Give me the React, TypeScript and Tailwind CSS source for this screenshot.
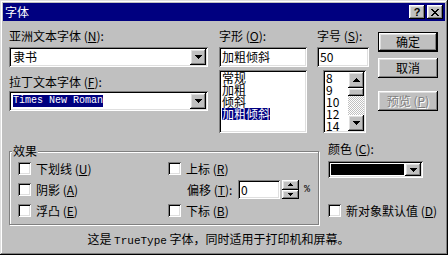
import React from 'react';

const raised =
  'bg-[#c0c0c0] shadow-[inset_-1px_-1px_0_#000,inset_1px_1px_0_#fff,inset_-2px_-2px_0_#808080,inset_2px_2px_0_#dfdfdf]';
const sunken =
  'bg-white shadow-[inset_1px_1px_0_#808080,inset_-1px_-1px_0_#fff,inset_2px_2px_0_#000,inset_-2px_-2px_0_#dfdfdf]';

const Arrow = ({ up = false }: { up?: boolean }) => (
  <svg width="7" height="4" viewBox="0 0 7 4" className="block" shapeRendering="crispEdges">
    <path
      d={up ? 'M3 0h1v1h1v1h1v1h1v1H0V3h1V2h1V1h1z' : 'M0 0h7v1H6v1H5v1H4v1H3V3H2V2H1V1H0z'}
      fill="#000"
    />
  </svg>
);

const DropButton = () => (
  <div className={`${raised} w-[16px] shrink-0 flex items-center justify-center`}>
    <Arrow />
  </div>
);

const Combo = ({ children, className = '' }: { children?: React.ReactNode; className?: string }) => (
  <div className={`${sunken} flex p-[2px] ${className}`}>
    <div className="flex-1 flex items-center overflow-hidden">{children}</div>
    <DropButton />
  </div>
);

const Key = ({ c }: { c: string }) => (
  <>
    {' '}(<u>{c}</u>)
  </>
);

const Label = ({ children, className = '' }: { children: React.ReactNode; className?: string }) => (
  <div className={`h-[12px] leading-[12px] whitespace-nowrap ${className}`}>{children}</div>
);

const Check = () => <div className={`${sunken} w-[13px] h-[13px] shrink-0`} />;

const CheckRow = ({ children }: { children: React.ReactNode }) => (
  <div className="flex items-center h-[13px] gap-[5px]">
    <Check />
    <span className="leading-[12px] whitespace-nowrap">{children}</span>
  </div>
);

const Button = ({
  children,
  className = '',
  isDefault = false,
  disabled = false,
}: {
  children: React.ReactNode;
  className?: string;
  isDefault?: boolean;
  disabled?: boolean;
}) => (
  <div className={`w-[60px] h-[20px] ${isDefault ? 'border border-black' : ''} ${className}`}>
    <div
      className={`${raised} w-full h-full flex items-center justify-center leading-[12px] ${
        disabled ? 'text-[#808080] [text-shadow:1px_1px_0_#fff]' : ''
      }`}
    >
      {children}
    </div>
  </div>
);

// list row: fixed 12px box so the tall CJK content area doesn't spill over
const Row = ({ children }: { children: React.ReactNode }) => (
  <div className="h-[12px] leading-[12px] overflow-visible">{children}</div>
);

export default function App() {
  return (
    <div className="w-[448px] h-[255px] bg-[#c0c0c0] p-[3px] flex flex-col text-[12px] text-black font-['Noto_Sans_CJK_SC',sans-serif] shadow-[inset_-1px_-1px_0_#000,inset_1px_1px_0_#dfdfdf,inset_-2px_-2px_0_#808080,inset_2px_2px_0_#fff]">
      {/* title bar */}
      <div className="h-[18px] bg-[#000080] flex items-center pl-[2px] pr-[2px]">
        <span className="text-white leading-[12px] flex-1">字体</span>
        <div className={`${raised} w-[16px] h-[14px] flex items-center justify-center font-['Liberation_Sans',sans-serif] font-bold text-[11px] leading-[11px]`}>
          ?
        </div>
        <div className={`${raised} w-[16px] h-[14px] ml-[2px] flex items-center justify-center`}>
          <svg width="8" height="7" viewBox="0 0 8 7" shapeRendering="crispEdges">
            <path d="M0 0h2v1h1v1h2V1h1V0h2v1H7v1H6v1H5v1h1v1h1v1h1v1H6V6H5V5H3v1H2v1H0V6h1V5h1V4h1V3H2V2H1V1H0z" fill="#000" />
          </svg>
        </div>
      </div>

      {/* top section */}
      <div className="flex pl-[6px]">
        <div className="w-[199px] flex flex-col">
          <Label className="mt-[9px]">
            亚洲文本字体<Key c="N" />:
          </Label>
          <Combo className="mt-[5px] h-[20px]">
            <span className="pl-[2px] leading-[12px]">隶书</span>
          </Combo>
          <Label className="mt-[9px]">
            拉丁文本字体<Key c="F" />:
          </Label>
          <Combo className="mt-[3px] h-[20px]">
            <span className="ml-[2px] inline-block h-[12px] bg-[#000080] text-white font-['Liberation_Mono',monospace] text-[10px] leading-[12px]">
              Times New Roman
            </span>
          </Combo>
        </div>

        <div className="w-[88px] ml-[11px] flex flex-col">
          <Label className="mt-[9px]">
            字形<Key c="O" />:
          </Label>
          <div className={`${sunken} mt-[5px] h-[20px] flex items-center pl-[3px]`}>
            <span className="leading-[12px]">加粗倾斜</span>
          </div>
          <div className={`${sunken} mt-[3px] h-[63px] p-[2px] pl-[3px] flex flex-col`}>
            <Row>常规</Row>
            <Row>加粗</Row>
            <Row>倾斜</Row>
            <Row>
              <span className="inline-block h-[12px] leading-[12px] align-top bg-[#000080] text-white">加粗倾斜</span>
            </Row>
          </div>
        </div>

        <div className="w-[52px] ml-[10px] flex flex-col">
          <Label className="mt-[9px]">
            字号<Key c="S" />:
          </Label>
          <div className={`${sunken} mt-[5px] h-[20px] flex items-center pl-[3px]`}>
            <span className="leading-[12px]">50</span>
          </div>
          <div className={`${sunken} mt-[3px] ml-[6px] w-[43px] h-[63px] p-[2px] flex`}>
            <div className="flex-1 flex flex-col pl-[1px]">
              <Row>8</Row>
              <Row>9</Row>
              <Row>10</Row>
              <Row>12</Row>
              <Row>14</Row>
            </div>
            <div className="w-[16px] flex flex-col">
              <div className={`${raised} h-[16px] flex items-center justify-center`}>
                <Arrow up />
              </div>
              <div className={`${raised} h-[8px]`} />
              <div className="flex-1 bg-[repeating-conic-gradient(#fff_0_25%,#c0c0c0_0_50%)] bg-[length:2px_2px]" />
              <div className={`${raised} h-[16px] flex items-center justify-center`}>
                <Arrow />
              </div>
            </div>
          </div>
        </div>

        <div className="w-[60px] ml-[9px] flex flex-col">
          <Button isDefault className="mt-[11px]">
            确定
          </Button>
          <Button className="mt-[6px]">取消</Button>
          <Button disabled className="mt-[13px]">
            预览<Key c="P" />
          </Button>
        </div>
      </div>

      {/* effects + colour */}
      <div className="flex pl-[6px]">
        <div className="relative mt-[18px] w-[310px] h-[74px] border border-[#808080] shadow-[inset_1px_1px_0_#fff,1px_1px_0_#fff]">
          <span className="absolute left-[2px] -top-[7px] px-[1px] bg-[#c0c0c0] leading-[12px]">效果</span>
          <div className="grid grid-cols-[150px_1fr] gap-y-[8px] pl-[8px] pt-[10px]">
            <CheckRow>
              下划线<Key c="U" />
            </CheckRow>
            <CheckRow>
              上标<Key c="R" />
            </CheckRow>
            <CheckRow>
              阴影<Key c="A" />
            </CheckRow>
            <div className="flex items-center h-[13px]">
              <span className="ml-[19px] w-[51px] shrink-0 leading-[12px] whitespace-nowrap">
                偏移<Key c="T" />:
              </span>
              <div className={`${sunken} w-[42px] h-[19px] shrink-0 flex items-center pl-[3px]`}>
                <span className="leading-[12px]">0</span>
              </div>
              <div className="ml-[2px] w-[17px] h-[19px] flex flex-col shrink-0">
                <div className={`${raised} flex-1 flex items-center justify-center`}>
                  <svg width="5" height="3" viewBox="0 0 5 3" shapeRendering="crispEdges">
                    <path d="M2 0h1v1h1v1h1v1H0V2h1V1h1z" fill="#000" />
                  </svg>
                </div>
                <div className={`${raised} flex-1 flex items-center justify-center`}>
                  <svg width="5" height="3" viewBox="0 0 5 3" shapeRendering="crispEdges">
                    <path d="M0 0h5v1H4v1H3v1H2V2H1V1H0z" fill="#000" />
                  </svg>
                </div>
              </div>
              <span className="ml-[5px] leading-[12px] text-[10px] font-['Liberation_Mono',monospace]">%</span>
            </div>
            <CheckRow>
              浮凸<Key c="E" />
            </CheckRow>
            <CheckRow>
              下标<Key c="B" />
            </CheckRow>
          </div>
        </div>

        <div className="ml-[9px] flex flex-col">
          <Label className="mt-[10px]">
            颜色<Key c="C" />:
          </Label>
          <div className={`${sunken} mt-[6px] w-[95px] h-[17px] p-[2px] flex`}>
            <div className="flex-1 p-[1px]">
              <div className="w-full h-full bg-black" />
            </div>
            <DropButton />
          </div>
          <div className="mt-[26px]">
            <CheckRow>
              新对象默认值<Key c="D" />
            </CheckRow>
          </div>
        </div>
      </div>

      {/* footer */}
      <div className="mt-[8px] pr-[11px] text-center leading-[12px] whitespace-nowrap">
        这是 <span className="font-['Liberation_Mono',monospace] text-[11px]">TrueType</span> 字体，同时适用于打印机和屏幕。
      </div>
    </div>
  );
}
